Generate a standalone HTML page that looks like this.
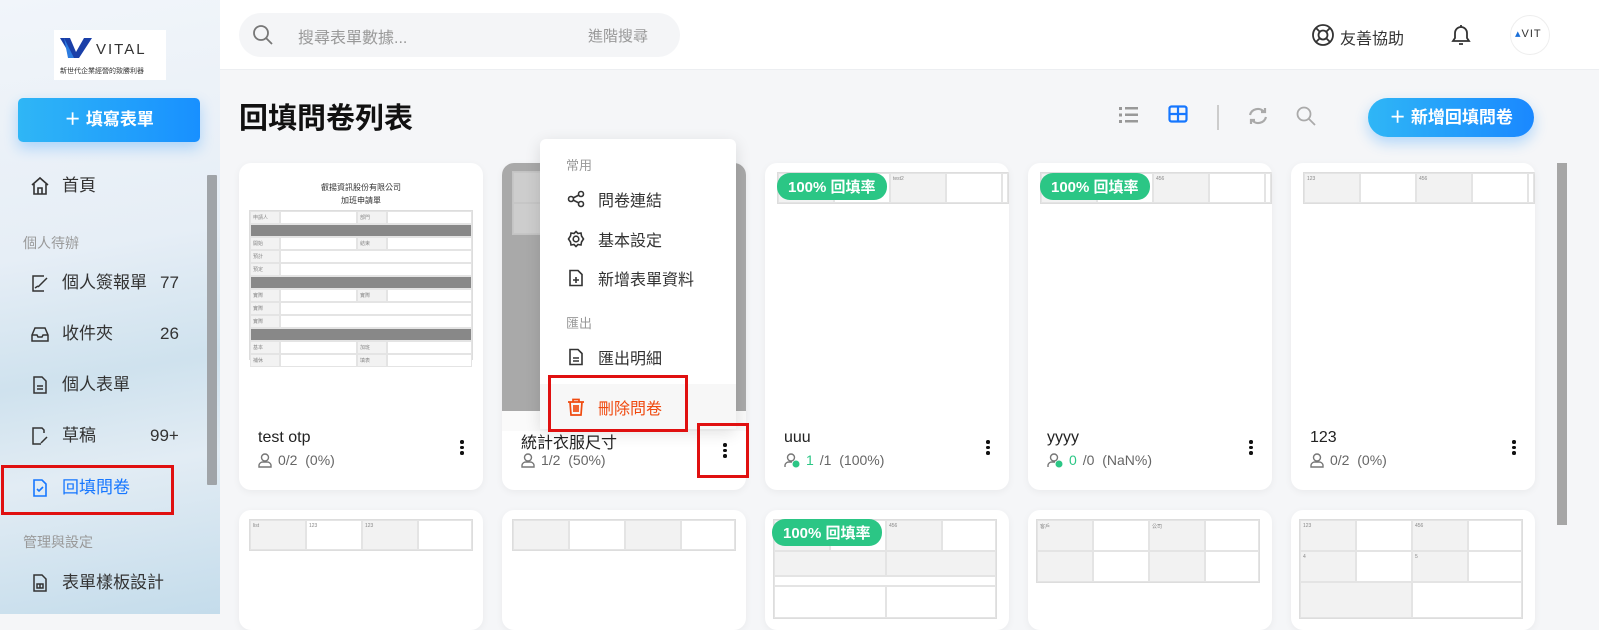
<!DOCTYPE html>
<html><head><meta charset="utf-8"><style>
*{box-sizing:border-box;margin:0;padding:0}
body{width:1599px;height:614px;overflow:hidden;font-family:"Liberation Sans","Noto Sans CJK TC",sans-serif;background:#f5f6f8;position:relative;color:#222}
.abs{position:absolute}
.side{left:0;top:0;width:220px;height:614px;background:linear-gradient(170deg,#f1f5fa 0%,#e6eef6 40%,#cfe2ee 60%,#e2ecf4 75%,#c4dceb 100%)}
.logo{left:54px;top:30px;width:112px;height:50px;background:#fff}
.nav{left:30px;font-size:17px;color:#333;display:flex;align-items:center;line-height:22px;height:22px}
.nav svg{margin-right:12px}
.sec{left:23px;font-size:14px;color:#999}
.cnt{left:160px;font-size:17px;color:#333;line-height:22px;height:22px}
.hdr{left:220px;top:0;width:1379px;height:70px;background:#fff;border-bottom:1px solid #eceef1}
.card{background:#fff;border-radius:12px;box-shadow:0 2px 8px rgba(0,0,0,.05);overflow:hidden}
.tbl{position:absolute;border:1px solid #ddd;display:grid}
.tbl div{border:1px solid #e4e4e4;background:#f2f2f2;font-size:5px;color:#888;padding:2px}
.tbl div.w{background:#fff}
.ttl{position:absolute;left:19px;top:266px;font-size:16px;color:#222}
.st{position:absolute;left:19px;top:289px;font-size:14px;color:#666;display:flex;align-items:center;gap:6px}
.dots{position:absolute;right:19px;top:277px;width:4px}
.dots i{display:block;width:3.5px;height:3.5px;background:#111;border-radius:50%;margin-bottom:2px}
.badge{position:absolute;left:12px;top:10px;background:#2bc685;color:#fff;font-size:15px;font-weight:bold;border-radius:13px;padding:3px 11px;white-space:nowrap}
.menu{left:540px;top:139px;width:196px;height:290px;background:#fff;border-radius:6px;box-shadow:0 4px 16px rgba(0,0,0,.12)}
.mi{position:absolute;left:27px;font-size:16px;color:#333;display:flex;align-items:center;gap:13px}
.mh{position:absolute;left:26px;font-size:13px;color:#999}
.red{border:3px solid #e01010}
</style></head><body>
<div class="abs side"></div>
<div class="abs logo">
<svg width="112" height="50"><path d="M6 8 L16 8 L22 22 L30 8 L38 8 L25 28 L18 28 Z" fill="#1a3fa8"/><path d="M10 8 L20 28 L14 28 Z" fill="#2b7be0"/><text x="42" y="24" font-size="15" fill="#333" font-family="Liberation Sans" letter-spacing="2">VITAL</text><text x="6" y="43" font-size="7" fill="#333" font-family="Noto Sans CJK TC">新世代企業經營的致勝利器</text></svg>
</div>
<div class="abs" style="left:18px;top:98px;width:182px;height:44px;border-radius:5px;background:linear-gradient(90deg,#2fb6f6,#1890ff);box-shadow:0 6px 14px rgba(24,144,255,.3);color:#fff;font-size:17px;font-weight:bold;text-align:center;line-height:44px">＋ 填寫表單</div>
<div class="abs" style="left:207px;top:175px;width:10px;height:310px;background:#a0a4a8;border-radius:1px"></div>
<div class="abs nav" style="top:175px"><svg width="20" height="20" viewBox="0 0 20 20" fill="none" stroke="#333" stroke-width="1.6"><path d="M2 9 L10 2 L18 9 M4 8 V18 H16 V8 M8 18 V12 H12 V18"/></svg>首頁</div>
<div class="abs sec" style="top:233px">個人待辦</div>
<div class="abs nav" style="top:272px"><svg width="20" height="20" viewBox="0 0 20 20" fill="none" stroke="#333" stroke-width="1.5"><path d="M14 3 H3 V18 H14 M8 14 L17 5 M5 15 L8 13"/></svg>個人簽報單</div><div class="abs cnt" style="top:272px">77</div>
<div class="abs nav" style="top:323px"><svg width="20" height="20" viewBox="0 0 20 20" fill="none" stroke="#333" stroke-width="1.5"><path d="M2 11 L5 4 H15 L18 11 V17 H2 Z M2 11 H7 L8 13 H12 L13 11 H18"/></svg>收件夾</div><div class="abs cnt" style="top:323px">26</div>
<div class="abs nav" style="top:374px"><svg width="20" height="20" viewBox="0 0 20 20" fill="none" stroke="#333" stroke-width="1.5"><path d="M4 2 H12 L16 6 V18 H4 Z M7 11 H13 M7 14 H13"/></svg>個人表單</div>
<div class="abs nav" style="top:425px"><svg width="20" height="20" viewBox="0 0 20 20" fill="none" stroke="#333" stroke-width="1.5"><path d="M14 7 V4 L12 2 H3 V18 H11 M11 17 L17 11"/></svg>草稿</div><div class="abs cnt" style="top:425px;left:150px">99+</div>
<div class="abs red" style="left:1px;top:465px;width:173px;height:50px"></div>
<div class="abs nav" style="top:477px;color:#1677ff"><svg width="20" height="20" viewBox="0 0 20 20" fill="none" stroke="#1677ff" stroke-width="1.6"><path d="M4 2 H12 L16 6 V18 H4 Z M7 11 L9 13 L13 9"/></svg>回填問卷</div>
<div class="abs sec" style="top:532px">管理與設定</div>
<div class="abs nav" style="top:572px"><svg width="20" height="20" viewBox="0 0 20 20" fill="none" stroke="#333" stroke-width="1.5"><path d="M4 2 H12 L16 6 V18 H4 Z M7 11 H13 V15 H7 Z M10 11 V15"/></svg>表單樣板設計</div>

<div class="abs hdr"></div>
<div class="abs" style="left:239px;top:13px;width:441px;height:44px;border-radius:22px;background:#f4f5f7"></div>
<svg class="abs" style="left:252px;top:24px" width="22" height="22" fill="none" stroke="#777" stroke-width="1.8"><circle cx="9" cy="9" r="7"/><path d="M14 14 L20 20"/></svg>
<div class="abs" style="left:298px;top:24px;font-size:16px;color:#999">搜尋表單數據...</div>
<div class="abs" style="left:588px;top:25px;font-size:15px;color:#999">進階搜尋</div>
<svg class="abs" style="left:1311px;top:23px" width="24" height="24" fill="none" stroke="#333" stroke-width="1.8"><circle cx="12" cy="12" r="10"/><circle cx="12" cy="12" r="4.5"/><path d="M5 5 L9 9 M19 5 L15 9 M5 19 L9 15 M19 19 L15 15"/></svg>
<div class="abs" style="left:1340px;top:25px;font-size:16px;color:#333">友善協助</div>
<svg class="abs" style="left:1448px;top:22px" width="26" height="26" fill="none" stroke="#333" stroke-width="1.8"><path d="M5 19 H21 L19 16 V11 A6 6 0 0 0 7 11 V16 Z M11 22 H15 M13 3 V5"/></svg>
<div class="abs" style="left:1510px;top:15px;width:40px;height:40px;border-radius:50%;background:#fff;border:1px solid #eee;overflow:hidden;font-size:11px;color:#333;padding:11px 0 0 4px;letter-spacing:1px"><span style="color:#1a6fd8">▴</span>VIT</div>

<div class="abs" style="left:239px;top:95px;font-size:29px;font-weight:bold;color:#111">回填問卷列表</div>
<svg class="abs" style="left:1118px;top:105px" width="22" height="20" fill="#999"><rect x="1" y="2" width="3" height="3"/><rect x="7" y="2" width="13" height="2.5"/><rect x="1" y="8.5" width="3" height="3"/><rect x="7" y="8.5" width="13" height="2.5"/><rect x="1" y="15" width="3" height="3"/><rect x="7" y="15" width="13" height="2.5"/></svg>
<svg class="abs" style="left:1168px;top:105px" width="20" height="20" fill="none" stroke="#1677ff" stroke-width="2.2"><rect x="1.5" y="1.5" width="17" height="15" rx="2"/><path d="M10 1.5 V16.5 M1.5 9 H18.5"/></svg>
<div class="abs" style="left:1217px;top:105px;width:2px;height:25px;background:#ccc"></div>
<svg class="abs" style="left:1247px;top:106px" width="22" height="20" fill="none" stroke="#aaa" stroke-width="2.2"><path d="M3 9 A8 8 0 0 1 17 6 M19 11 A8 8 0 0 1 5 14 M14 6 H18 V2 M8 14 H4 V18"/></svg>
<svg class="abs" style="left:1296px;top:106px" width="22" height="20" fill="none" stroke="#aaa" stroke-width="1.8"><circle cx="8" cy="8" r="6.5"/><path d="M13 13 L19 19"/></svg>
<div class="abs" style="left:1368px;top:98px;width:166px;height:39px;border-radius:20px;background:linear-gradient(90deg,#2fb6f6,#1a88ff);box-shadow:0 6px 14px rgba(24,144,255,.3);color:#fff;font-size:17px;font-weight:bold;text-align:center;line-height:39px">＋ 新增回填問卷</div>

<!-- row 1 -->
<div class="abs card" style="left:239px;top:163px;width:244px;height:327px">
 <div style="position:absolute;left:0;top:18px;width:244px;text-align:center;font-size:8px;color:#333;line-height:13px">叡揚資訊股份有限公司<br>加班申請單</div>
 <div class="tbl" style="left:10px;top:47px;width:224px;height:150px;grid-template-columns:30px 77px 30px 1fr;grid-auto-rows:13px">
  <div>申請人</div><div class="w"></div><div>部門</div><div class="w"></div>
  <div style="grid-column:span 4;background:#888"></div>
  <div>開始</div><div class="w"></div><div>結束</div><div class="w"></div>
  <div>預計</div><div class="w" style="grid-column:span 3"></div>
  <div>預定</div><div class="w" style="grid-column:span 3"></div>
  <div style="grid-column:span 4;background:#888"></div>
  <div>實際</div><div class="w"></div><div>實際</div><div class="w"></div>
  <div>實際</div><div class="w" style="grid-column:span 3"></div>
  <div>實際</div><div class="w" style="grid-column:span 3"></div>
  <div style="grid-column:span 4;background:#888"></div>
  <div>基本</div><div class="w"></div><div>加班</div><div class="w"></div>
  <div>補休</div><div class="w"></div><div>填表</div><div class="w"></div>
 </div>
 <div class="ttl">test otp</div>
 <div class="st"><svg width="14" height="15" fill="none" stroke="#777" stroke-width="1.4"><circle cx="7" cy="4.5" r="3.5"/><path d="M1 14 V12 A4 4 0 0 1 5 9 H9 A4 4 0 0 1 13 12 V14 Z"/></svg>0/2 &nbsp;(0%)</div>
 <div class="dots"><i></i><i></i><i></i></div>
</div>
<div class="abs card" style="left:502px;top:163px;width:244px;height:327px">
 <div style="position:absolute;left:0;top:0;width:244px;height:248px;background:#a9a9a9"></div>
 <div class="tbl" style="left:10px;top:8px;width:60px;height:64px;grid-template-columns:1fr;grid-auto-rows:31px;opacity:.5"><div></div><div></div></div>
 <div style="position:absolute;left:0;top:248px;width:244px;height:20px;background:#fafafa"></div>
 <div class="ttl">統計衣服尺寸</div>
 <div class="st"><svg width="14" height="15" fill="none" stroke="#777" stroke-width="1.4"><circle cx="7" cy="4.5" r="3.5"/><path d="M1 14 V12 A4 4 0 0 1 5 9 H9 A4 4 0 0 1 13 12 V14 Z"/></svg>1/2 &nbsp;(50%)</div>
 <div class="dots" style="right:19px;top:280px"><i></i><i></i><i></i></div>
</div>
<div class="abs card" style="left:765px;top:163px;width:244px;height:327px">
 <div class="tbl" style="left:12px;top:9px;width:232px;height:32px;grid-template-columns:56px 56px 56px 56px 1fr;grid-auto-rows:1fr"><div></div><div class="w"></div><div>test2</div><div class="w"></div><div class="w"></div></div>
 <div class="badge">100% 回填率</div>
 <div class="ttl">uuu</div>
 <div class="st"><svg width="16" height="15" fill="none" stroke="#777" stroke-width="1.4"><circle cx="7" cy="4.5" r="3.5"/><path d="M1 14 V12 A4 4 0 0 1 5 9 H8"/><circle cx="12" cy="11" r="3.5" fill="#2bc685" stroke="none"/></svg><span style="color:#2bc685">1</span>/1 &nbsp;(100%)</div>
 <div class="dots"><i></i><i></i><i></i></div>
</div>
<div class="abs card" style="left:1028px;top:163px;width:244px;height:327px">
 <div class="tbl" style="left:12px;top:9px;width:232px;height:32px;grid-template-columns:56px 56px 56px 56px 1fr;grid-auto-rows:1fr"><div></div><div class="w"></div><div>456</div><div class="w"></div><div class="w"></div></div>
 <div class="badge">100% 回填率</div>
 <div class="ttl">yyyy</div>
 <div class="st"><svg width="16" height="15" fill="none" stroke="#777" stroke-width="1.4"><circle cx="7" cy="4.5" r="3.5"/><path d="M1 14 V12 A4 4 0 0 1 5 9 H8"/><circle cx="12" cy="11" r="3.5" fill="#2bc685" stroke="none"/></svg><span style="color:#2bc685">0</span>/0 &nbsp;(NaN%)</div>
 <div class="dots"><i></i><i></i><i></i></div>
</div>
<div class="abs card" style="left:1291px;top:163px;width:244px;height:327px">
 <div class="tbl" style="left:12px;top:9px;width:232px;height:32px;grid-template-columns:56px 56px 56px 56px 1fr;grid-auto-rows:1fr"><div>123</div><div class="w"></div><div>456</div><div class="w"></div><div class="w"></div></div>
 <div class="ttl">123</div>
 <div class="st"><svg width="14" height="15" fill="none" stroke="#777" stroke-width="1.4"><circle cx="7" cy="4.5" r="3.5"/><path d="M1 14 V12 A4 4 0 0 1 5 9 H9 A4 4 0 0 1 13 12 V14 Z"/></svg>0/2 &nbsp;(0%)</div>
 <div class="dots"><i></i><i></i><i></i></div>
</div>
<!-- row 2 -->
<div class="abs card" style="left:239px;top:510px;width:244px;height:120px"><div class="tbl" style="left:10px;top:9px;width:224px;height:32px;grid-template-columns:56px 56px 56px 1fr;grid-auto-rows:1fr"><div>list</div><div class="w">123</div><div>123</div><div class="w"></div></div></div>
<div class="abs card" style="left:502px;top:510px;width:244px;height:120px"><div class="tbl" style="left:10px;top:9px;width:224px;height:32px;grid-template-columns:56px 56px 56px 1fr;grid-auto-rows:1fr"><div></div><div class="w"></div><div></div><div class="w"></div></div></div>
<div class="abs card" style="left:765px;top:510px;width:244px;height:120px"><div class="tbl" style="left:8px;top:9px;width:224px;height:100px;grid-template-columns:56px 56px 56px 1fr;grid-auto-rows:31px 25px 10px 1fr"><div></div><div class="w"></div><div>456</div><div class="w"></div><div style="grid-column:span 2"></div><div style="grid-column:span 2"></div><div style="grid-column:span 4" class="w"></div><div class="w" style="grid-column:span 2"></div><div class="w" style="grid-column:span 2"></div></div><div class="badge" style="left:7px;top:9px">100% 回填率</div></div>
<div class="abs card" style="left:1028px;top:510px;width:244px;height:120px"><div class="tbl" style="left:8px;top:9px;width:224px;height:64px;grid-template-columns:56px 56px 56px 1fr;grid-auto-rows:1fr"><div>客戶</div><div class="w"></div><div>公司</div><div class="w"></div><div></div><div class="w"></div><div></div><div class="w"></div></div></div>
<div class="abs card" style="left:1291px;top:510px;width:244px;height:120px"><div class="tbl" style="left:8px;top:9px;width:224px;height:100px;grid-template-columns:56px 56px 56px 1fr;grid-auto-rows:31px 31px 1fr"><div>123</div><div class="w"></div><div>456</div><div class="w"></div><div>4</div><div class="w"></div><div>5</div><div class="w"></div><div style="grid-column:span 2"></div><div class="w" style="grid-column:span 2"></div></div></div>

<!-- menu -->
<div class="abs menu">
 <div class="mh" style="top:16px">常用</div>
 <div class="mi" style="top:48px"><svg width="18" height="18" fill="none" stroke="#333" stroke-width="1.6"><circle cx="4" cy="9" r="2.5"/><circle cx="14" cy="4" r="2.5"/><circle cx="14" cy="14" r="2.5"/><path d="M6 8 L12 5 M6 10 L12 13"/></svg>問卷連結</div>
 <div class="mi" style="top:88px"><svg width="18" height="18" fill="none" stroke="#333" stroke-width="1.6"><circle cx="9" cy="9" r="2.8"/><path d="M9 1.5 L11 3.5 L14 3 L14.5 6 L16.5 9 L14.5 12 L14 15 L11 14.5 L9 16.5 L7 14.5 L4 15 L3.5 12 L1.5 9 L3.5 6 L4 3 L7 3.5 Z"/></svg>基本設定</div>
 <div class="mi" style="top:127px"><svg width="18" height="18" fill="none" stroke="#333" stroke-width="1.6"><path d="M3 1.5 H11 L15 5.5 V16.5 H3 Z M9 8 V14 M6 11 H12"/></svg>新增表單資料</div>
 <div class="mh" style="top:174px">匯出</div>
 <div class="mi" style="top:206px"><svg width="18" height="18" fill="none" stroke="#333" stroke-width="1.6"><path d="M3 1.5 H11 L15 5.5 V16.5 H3 Z M6 10 H12 M6 13 H12"/></svg>匯出明細</div>
 <div style="position:absolute;left:0;top:245px;width:196px;height:45px;background:#f7f7f7"></div>
 <div class="mi" style="top:256px;color:#f04a0f"><svg width="18" height="18" fill="none" stroke="#f04a0f" stroke-width="1.7"><path d="M1 4 H17 M6 4 V1.5 H12 V4 M3 4 L4 17 H14 L15 4 M7 7 V14 M9 7 V14 M11 7 V14"/></svg>刪除問卷</div>
</div>
<div class="abs red" style="left:548px;top:375px;width:140px;height:57px"></div>
<div class="abs red" style="left:697px;top:423px;width:52px;height:55px"></div>

<div class="abs" style="left:1557px;top:163px;width:10px;height:362px;background:#a6a6a6"></div>
</body></html>
